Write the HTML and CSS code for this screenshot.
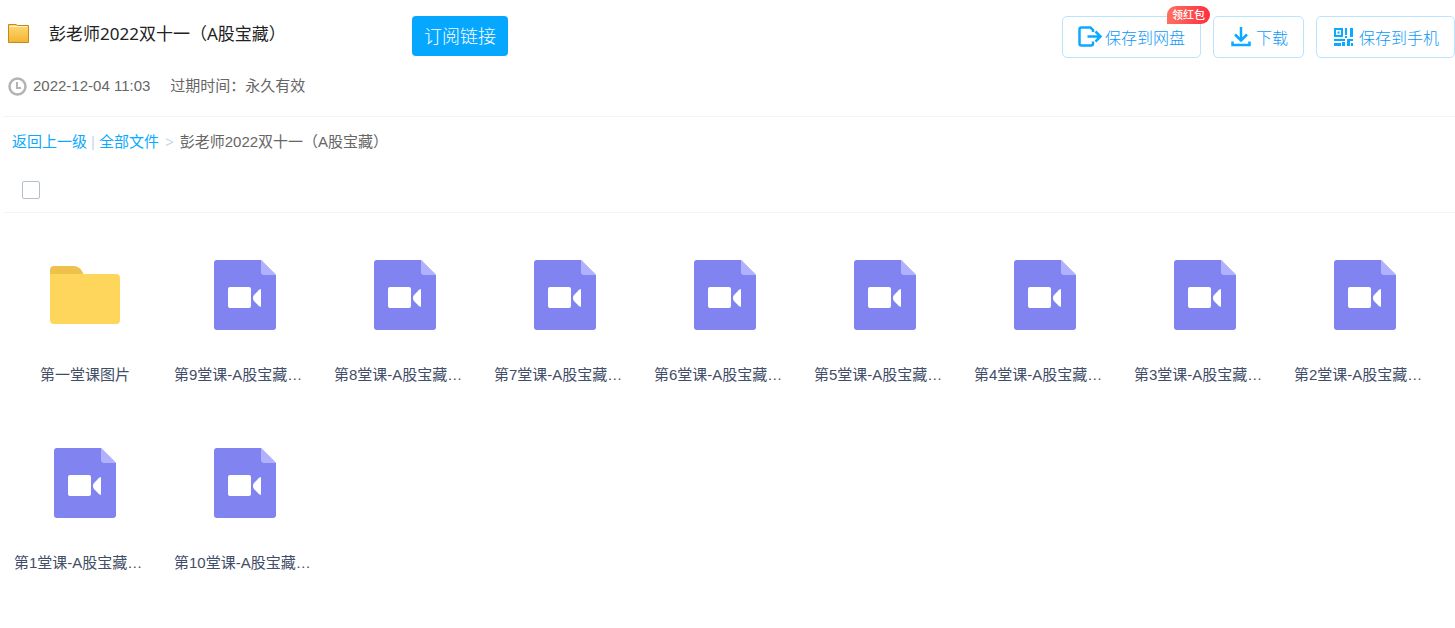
FILE: index.html
```html
<!DOCTYPE html>
<html lang="zh-CN">
<head>
<meta charset="utf-8">
<title>彭老师2022双十一（A股宝藏）</title>
<link rel="stylesheet" href="styles.css">
</head>
<body>
<svg class="sprite" aria-hidden="true">
  <symbol id="video" viewBox="0 0 62 70">
    <path d="M3 0H47L62 15V67Q62 70 59 70H3Q0 70 0 67V3Q0 0 3 0Z" fill="#8183f1"/>
    <path d="M47 0L62 15H50Q47 15 47 12Z" fill="#b1b1ff"/>
    <rect x="14" y="27" width="23" height="21" rx="2" fill="#fff"/>
    <path d="M47 29V47Q45 47 43 44L40 41Q39 40 39 38Q39 36 40 35L43 32Q45 29 47 29Z" fill="#fff"/>
  </symbol>
</svg>
<header class="header">
  <div class="top">
    <div class="heading">
      <svg width="21" height="20" viewBox="0 0 21 20" aria-hidden="true">
        <defs><linearGradient id="gold" x1="0" y1="0" x2="0" y2="1"><stop offset="0" stop-color="#ffd978"/><stop offset="1" stop-color="#f2b530"/></linearGradient></defs>
        <path d="M.5 .5H8L9.500 1.500H20.500V18.500H.5Z" fill="url(#gold)" stroke="#c28a1c"/>
        <path d="M2 2.500H19" fill="none" stroke="#fff0bd"/>
      </svg>
      <h1 class="title">彭老师2022双十一（A股宝藏）</h1>
    </div>
    <button class="subscribe" type="button">订阅链接</button>
    <div class="actions">
      <button class="action" type="button">
        <svg width="24" height="22" viewBox="0 0 24 22" fill="none" stroke="#09aaff" stroke-width="2.500" aria-hidden="true"><path d="M15 6V4L12.500 1.500H3.500Q1.500 1.500 1.500 3.500V17.500Q1.500 19.500 3.500 19.500H13Q15 19.500 15 17.500V15.500M9.500 10.500H22M17.500 5.500L22.500 10.500L17.500 15.500"/></svg>
        <span>保存到网盘</span>
        <span class="badge">领红包</span>
      </button>
      <button class="action download" type="button">
        <svg width="20" height="20" viewBox="0 0 20 20" fill="none" stroke="#09aaff" stroke-width="2.500" aria-hidden="true"><path d="M10 0V13M4 7.500L10 13.500L16 7.500M1.500 14.500V18H18.500V14.500"/></svg>
        <span>下载</span>
      </button>
      <button class="action phone" type="button">
        <svg width="19" height="18" viewBox="0 0 19 18" fill="#09aaff" aria-hidden="true">
          <path fill-rule="evenodd" d="M0 0H9V9H0ZM2 2V7H7V2Z"/>
          <path d="M3.500 3.500H5.500V5.500H3.500ZM11 0H13V7H11ZM16 0H19V9H16ZM11 8H13V10H11ZM0 11H11V13H0ZM13 11H19V13H13ZM0 15H7V18H0ZM8 14H11V18H8ZM13 12H16V18H13ZM17 15H19V18H17Z"/>
        </svg>
        <span>保存到手机</span>
      </button>
    </div>
  </div>
  <div class="meta">
    <svg width="19" height="19" viewBox="0 0 19 19" fill="none" stroke="#b3b3b3" aria-hidden="true"><circle cx="9.500" cy="9.500" r="8" stroke-width="2.500"/><path d="M9 5V11H13" stroke-width="2"/></svg>
    <time>2022-12-04 11:03</time>
    <span class="expires">过期时间：永久有效</span>
  </div>
</header>
<main class="main">
  <nav class="crumbs" aria-label="路径">
    <a href="#">返回上一级</a><span class="sep">|</span><a href="#">全部文件</a><span class="sep arrow">&gt;</span><span>彭老师2022双十一（A股宝藏）</span>
  </nav>
  <div class="select-row"><input class="check" type="checkbox" aria-label="全选"></div>
  <ul class="files">
    <li class="file folder">
      <svg class="icon" width="70" height="70" viewBox="0 0 70 70" aria-hidden="true"><path d="M0 18V10Q0 6 4 6H24Q31 6 34 16V18Z" fill="#eec04c"/><path d="M0 14H66Q70 14 70 18V60Q70 64 66 64H4Q0 64 0 60Z" fill="#ffd65c"/></svg>
      <span class="name">第一堂课图片</span>
    </li>
    <li class="file"><svg class="icon" width="62" height="70"><use href="#video"/></svg><span class="name">第9堂课-A股宝藏…</span></li>
    <li class="file"><svg class="icon" width="62" height="70"><use href="#video"/></svg><span class="name">第8堂课-A股宝藏…</span></li>
    <li class="file"><svg class="icon" width="62" height="70"><use href="#video"/></svg><span class="name">第7堂课-A股宝藏…</span></li>
    <li class="file"><svg class="icon" width="62" height="70"><use href="#video"/></svg><span class="name">第6堂课-A股宝藏…</span></li>
    <li class="file"><svg class="icon" width="62" height="70"><use href="#video"/></svg><span class="name">第5堂课-A股宝藏…</span></li>
    <li class="file"><svg class="icon" width="62" height="70"><use href="#video"/></svg><span class="name">第4堂课-A股宝藏…</span></li>
    <li class="file"><svg class="icon" width="62" height="70"><use href="#video"/></svg><span class="name">第3堂课-A股宝藏…</span></li>
    <li class="file"><svg class="icon" width="62" height="70"><use href="#video"/></svg><span class="name">第2堂课-A股宝藏…</span></li>
    <li class="file"><svg class="icon" width="62" height="70"><use href="#video"/></svg><span class="name">第1堂课-A股宝藏…</span></li>
    <li class="file"><svg class="icon" width="62" height="70"><use href="#video"/></svg><span class="name">第10堂课-A股宝藏…</span></li>
  </ul>
</main>
</body>
</html>
```

FILE: styles.css
```css
* { box-sizing: border-box; }
body {
  margin: 0;
  background: #fff;
  color: #666;
  font: 15px/20px "Liberation Sans", "Noto Sans CJK SC", sans-serif;
}
button { font-family: inherit; font-weight: 300; cursor: pointer; }
svg { flex: none; }
.sprite { position: absolute; width: 0; height: 0; }
.header {
  margin-left: 3px;
  padding: 16px 0 20px 5px;
  border-bottom: 1px solid #f2f4f6;
}
.top { display: flex; align-items: flex-start; }
.heading {
  display: flex;
  align-items: center;
  gap: 20px;
  min-width: 404px;
  height: 36px;
}
.title {
  margin: 0;
  color: #222;
  font: 400 17px/24px "Noto Sans", "Noto Sans CJK SC", sans-serif;
}
.subscribe {
  height: 40px;
  padding: 0 12px 2px;
  border: 0;
  border-radius: 4px;
  background: #06a7ff;
  color: #fff;
  font-size: 18px;
}
.actions { display: flex; gap: 12px; margin-left: auto; }
.action {
  position: relative;
  display: flex;
  align-items: center;
  gap: 3px;
  height: 42px;
  padding: 0 15px;
  border: 1px solid #b9e5ff;
  border-radius: 5px;
  background: #fff;
  color: #0c98f5;
  font-size: 16px;
  white-space: nowrap;
}
.download { gap: 5px; padding-left: 17px; }
.phone { gap: 6px; padding-left: 17px; }
.badge {
  position: absolute;
  top: -11px;
  right: -10px;
  padding: 0 5px;
  border-radius: 9px 9px 9px 0;
  background: linear-gradient(90deg, #ff7060, #ff2f3f);
  color: #fff;
  font-size: 11px;
  font-weight: 500;
  line-height: 18px;
}
.meta { display: flex; align-items: center; gap: 6px; margin-top: 18px; }
.expires { margin-left: 14px; }
.main { padding-left: 4px; }
.crumbs { display: flex; padding: 15px 8px; }
.crumbs a { color: #09aaff; text-decoration: none; }
.sep { margin: 0 4px; color: #c4d8f0; }
.arrow { margin: 0 6px; }
.select-row {
  display: flex;
  align-items: center;
  height: 46px;
  padding-left: 18px;
  border-bottom: 1px solid #f2f4f6;
}
.check {
  appearance: none;
  width: 18px;
  height: 18px;
  margin: 0;
  border: 1px solid #b4bfce;
  border-radius: 2px;
  background: #fff;
}
.check:checked { background: #09aaff; }
.files {
  display: grid;
  grid-template-columns: repeat(auto-fill, 160px);
  row-gap: 48px;
  margin: 0;
  padding: 47px 0 47px 1px;
  list-style: none;
}
.file { display: flex; flex-direction: column; align-items: center; gap: 35px; height: 140px; }
.name {
  width: 142px;
  overflow: hidden;
  color: #424e67;
  line-height: 20px;
  white-space: nowrap;
}
.folder .name { text-align: center; }
```
